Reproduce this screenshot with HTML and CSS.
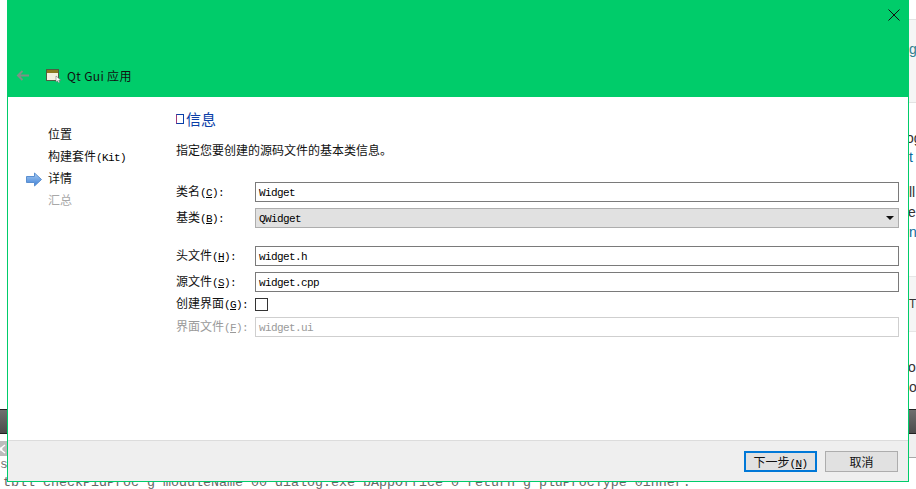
FILE: index.html
```html
<!DOCTYPE html>
<html lang="zh">
<head>
<meta charset="utf-8">
<title>Qt Gui 应用</title>
<link rel="stylesheet" href="styles.css">
</head>
<body>
<div class="desktop">
  <div class="bg-left">
    <div class="bg-dark"></div>
    <div class="bg-share"><svg width="7" height="12" viewBox="0 0 7 12"><path d="M0 6l5-4M0 6l5 4" stroke="#fff" stroke-width="1.500" fill="none"/><circle cx="1" cy="6" r="1.500" fill="#fff"/></svg></div>
    <div class="bg-s">s</div>
  </div>
  <div class="bg-right">
    <div class="bg-panel top"><span class="frag g">g</span></div>
    <div class="frag og">og</div>
    <div class="frag t">t</div>
    <div class="frag ll">ll</div>
    <div class="frag er">er</div>
    <div class="frag n">n</div>
    <div class="bg-panel mid"><span class="frag tt">T</span></div>
    <div class="frag ou">ou</div>
    <div class="frag o">o</div>
    <div class="bg-dark r"></div>
    <div class="bg-shelf"></div>
  </div>
  <div class="bg-code">tbll checkPidProc g moduleName 00 dialog.exe bAppOffice 0 return g pluProcType 0inner.</div>

  <section class="dialog">
    <header class="head">
      <svg class="close" width="12" height="12" viewBox="0 0 12 12"><path d="M.5.5l11 11M11.500.5l-11 11" stroke="#111" fill="none"/></svg>
      <div class="titlebar">
        <svg class="back" width="13" height="11" viewBox="0 0 13 11"><path d="M13 5.500H2M6.500 1L2 5.500 6.500 10" stroke="#7f8f86" stroke-width="2" fill="none"/></svg>
        <svg class="appicon" width="15" height="14" viewBox="0 0 15 14"><rect x=".5" y=".5" width="12" height="11" fill="#f4f1e0" stroke="#4f5c42"/><rect x="1" y="1" width="11" height="3" fill="#8c7a22"/><path d="M10 7v6l1.500-1.200 1 2 1.200-.6-1-1.900H15z" fill="#fff" stroke="#666" stroke-width=".5"/></svg>
        <span class="title">Qt Gui 应用</span>
      </div>
    </header>
    <div class="body">
      <nav class="steps">
        <div class="step">位置</div>
        <div class="step">构建套件<span class="m">(Kit)</span></div>
        <div class="step current">
          <svg class="arrow" width="17" height="15" viewBox="0 0 17 15"><defs><linearGradient id="ag" x1="0" y1="0" x2="0" y2="1"><stop offset="0" stop-color="#a9cdf3"/><stop offset="1" stop-color="#3d7fd6"/></linearGradient></defs><path d="M.5 4.500h8V1l7 6.500-7 6.500V10.500h-8z" fill="url(#ag)" stroke="#5b8fd0"/></svg>
          详情
        </div>
        <div class="step muted">汇总</div>
      </nav>
      <main class="content">
        <h1 class="heading"><span class="tofu"></span>信息</h1>
        <p class="desc">指定您要创建的源码文件的基本类信息。</p>
        <div class="form">
          <label class="lab">类名<span class="m">(<u>C</u>):</span></label>
          <div class="field"><span class="m">Widget</span></div>
          <label class="lab">基类<span class="m">(<u>B</u>):</span></label>
          <div class="field combo"><span class="m">QWidget</span><i class="caret"></i></div>
          <div class="spacer"></div>
          <label class="lab">头文件<span class="m">(<u>H</u>):</span></label>
          <div class="field"><span class="m">widget.h</span></div>
          <label class="lab">源文件<span class="m">(<u>S</u>):</span></label>
          <div class="field"><span class="m">widget.cpp</span></div>
          <label class="lab">创建界面<span class="m">(<u>G</u>):</span></label>
          <div class="checkrow"><span class="check"></span></div>
          <label class="lab off">界面文件<span class="m">(<u>F</u>):</span></label>
          <div class="field off"><span class="m">widget.ui</span></div>
        </div>
      </main>
    </div>
    <footer class="foot">
      <button class="btn primary">下一步<span class="m">(<u>N</u>)</span></button>
      <button class="btn">取消</button>
    </footer>
  </section>
</div>
</body>
</html>
```

FILE: styles.css
```css
* { box-sizing: border-box; }
html, body { margin: 0; padding: 0; }
body { width: 916px; height: 489px; overflow: hidden; background: #fff; }
.desktop {
  position: relative;
  width: 916px;
  height: 489px;
  overflow: hidden;
  background: #fff;
  font-family: "Noto Sans CJK SC", "Liberation Sans", sans-serif;
  font-size: 12px;
  color: #111;
}
.bg-left { position: absolute; left: 0; top: 0; width: 7px; height: 489px; }
.bg-dark { position: absolute; left: 0; top: 409px; width: 100%; height: 25px; background: linear-gradient(#6e6e6e, #4c4c4c); border-top: 1px solid #222; border-bottom: 1px solid #222; }
.bg-share { position: absolute; left: 0; top: 441px; width: 7px; height: 15px; background: #bcbcbc; display: flex; align-items: center; }
.bg-s { position: absolute; left: 0; top: 457px; font: 13px/16px "Liberation Mono", monospace; color: #777; }
.bg-right { position: absolute; left: 909px; top: 0; width: 7px; height: 489px; overflow: hidden; }
.bg-panel { position: absolute; left: 0; width: 7px; background: #f5f5f5; }
.bg-panel.top { top: 19px; height: 84px; border-top: 1px solid #e3e3e3; border-bottom: 1px solid #e3e3e3; }
.bg-panel.mid { top: 276px; height: 56px; border-top: 1px solid #e6e6e6; border-bottom: 1px solid #e6e6e6; }
.bg-dark.r { top: 409px; height: 25px; }
.bg-shelf { position: absolute; left: 0; top: 434px; width: 7px; height: 24px; background: #f0f0f0; border-bottom: 1px solid #a8a8a8; }
.frag { position: absolute; left: 0; font: 14px/16px "Liberation Sans", sans-serif; color: #333; white-space: nowrap; }
.g { top: 21px; color: #2f7f8f; }
.og { top: 130px; left: -3px; color: #333; }
.t { top: 149px; color: #0b6a9a; }
.ll { top: 184px; color: #333; }
.er { top: 204px; left: -1px; color: #333; }
.n { top: 224px; color: #0b6a9a; }
.tt { top: 19px; font-size: 12px; }
.ou { top: 359px; left: -1px; }
.o { top: 379px; }
.bg-code { position: absolute; left: 3px; top: 475px; font: 13.33px/16px "Liberation Mono", monospace; color: #666; white-space: nowrap; }

.dialog {
  position: absolute;
  left: 7px;
  top: 0;
  width: 902px;
  height: 482px;
  background: #fff;
  border: 1px solid #00cc6a;
  border-top: 0;
  display: flex;
  flex-direction: column;
}
.head { position: relative; margin: 0 -1px; height: 97px; background: #00cc6a; display: flex; align-items: flex-end; flex: none; }
.close { position: absolute; right: 9px; top: 9px; }
.titlebar { display: flex; align-items: center; height: 43px; padding-left: 9px; }
.back { flex: none; }
.appicon { margin-left: 17px; flex: none; }
.title { margin-left: 6px; font-size: 12px; letter-spacing: .35px; color: #111; }
.m { font-family: "Liberation Mono", monospace; font-size: 11px; letter-spacing: -.6px; color: #000; }
.body { flex: 1; display: flex; min-height: 0; }
.steps { width: 166px; flex: none; padding-top: 26px; }
.step { position: relative; height: 22px; line-height: 22px; padding-left: 40px; white-space: nowrap; }
.step.muted { color: #a8a8a8; }
.arrow { position: absolute; left: 18px; top: 5px; }
.content { flex: 1; padding: 13px 9px 0 0; min-width: 0; }
.heading { margin: 0; height: 18px; font-size: 15px; line-height: 18px; font-weight: 400; color: #0a3ea8; display: flex; align-items: center; }
.tofu { width: 8px; height: 10px; border: 1px solid #0a3ea8; border-left-color: #a03a7a; margin: 0 2px 0 2px; }
.desc { margin: 14px 0 0 2px; height: 16px; line-height: 16px; }
.form { margin-top: 24px; display: grid; grid-template-columns: 81px 1fr; row-gap: 6px; align-items: center; }
.lab { height: 13px; line-height: 10px; padding-left: 2px; white-space: nowrap; }
.lab.off, .field.off, .off .m { color: #9a9a9a; }
.field { height: 20px; border: 1px solid #7a7a7a; padding: 2px 3px 0; line-height: 18px; display: flex; align-items: center; justify-content: space-between; }
.field.combo { background: #e1e1e1; border-color: #adadad; }
.field.off { border-color: #cfcfcf; }
.caret { width: 0; height: 0; border-left: 4px solid transparent; border-right: 4px solid transparent; border-top: 4px solid #111; margin: -2px 1px 0 0; }
.spacer { grid-column: 1 / -1; height: 6px; }
.checkrow { height: 13px; display: flex; align-items: center; }
.check { width: 13px; height: 13px; border: 1px solid #333; background: #fff; }
.foot { flex: none; height: 41px; background: #efefef; border-top: 1px solid #dcdcdc; display: flex; justify-content: flex-end; align-items: center; gap: 8px; padding: 0 10px 0 0; }
.btn { width: 73px; height: 21px; padding: 0; font: inherit; color: #111; background: #e1e1e1; border: 1px solid #adadad; border-radius: 0; }
.btn.primary { border: 2px solid #0078d7; }
```
